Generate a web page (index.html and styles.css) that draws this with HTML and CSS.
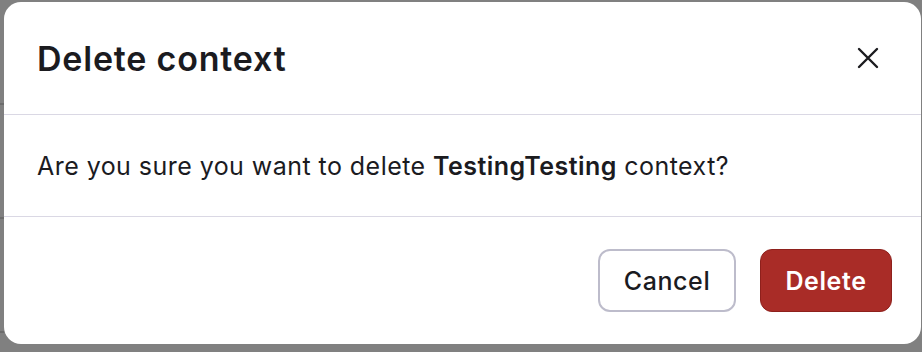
FILE: index.html
```html
<!DOCTYPE html>
<html>
<head>
<meta charset="utf-8">
<link rel="stylesheet" href="styles.css">
</head>
<body>
<div class="modal">
  <div class="modal-header">
    <h2 class="title">Delete context</h2>
    <button class="close" aria-label="Close">
      <svg width="22" height="22" viewBox="0 0 22 22"><path d="M2 2 L20 20 M20 2 L2 20" stroke="#1b1b1f" stroke-width="2.4" stroke-linecap="round"/></svg>
    </button>
  </div>
  <div class="modal-body">
    <p class="msg">Are you sure you want to delete <strong>TestingTesting</strong> context?</p>
  </div>
  <div class="modal-footer">
    <button class="btn btn-cancel">Cancel</button>
    <button class="btn btn-delete">Delete</button>
  </div>
</div>
</body>
</html>
```
FILE: styles.css
```css
html, body {
  margin: 0;
  padding: 0;
}
body {
  width: 922px;
  height: 352px;
  overflow: hidden;
  background-color: #808080;
  background-image:
    linear-gradient(#6c6c6c, #6c6c6c),
    linear-gradient(#6c6c6c, #6c6c6c),
    linear-gradient(#6c6c6c, #6c6c6c);
  background-size: 4px 2px, 4px 2px, 4px 2px;
  background-position: 0 103px, 0 217px, 0 331px;
  background-repeat: no-repeat;
  font-family: Inter, "Liberation Sans", sans-serif;
  color: #1b1b1f;
}
.modal {
  margin: 2px 0 0 4px;
  width: 917px;
  height: 342px;
  background: #ffffff;
  border-radius: 17px;
  display: flex;
  flex-direction: column;
  box-sizing: border-box;
}
.modal-header {
  height: 113px;
  box-sizing: border-box;
  border-bottom: 1px solid #dad8e4;
  display: flex;
  align-items: center;
  justify-content: space-between;
  padding: 0 41px 0 33px;
}
.title {
  margin: 0;
  font-size: 34px;
  font-weight: 600;
  letter-spacing: 0.8px;
  color: #1b1b1f;
}
.close {
  border: 0;
  background: none;
  padding: 0;
  width: 24px;
  height: 24px;
  display: flex;
  align-items: center;
  justify-content: center;
  cursor: pointer;
}
.modal-body {
  height: 102px;
  box-sizing: border-box;
  border-bottom: 1px solid #dad8e4;
  display: flex;
  align-items: center;
  padding: 0 33px;
}
.msg {
  margin: 0;
  font-size: 25px;
  letter-spacing: 0.45px;
  color: #1b1b1f;
}
.msg strong {
  font-weight: 600;
}
.modal-footer {
  flex: 1;
  display: flex;
  align-items: center;
  justify-content: flex-end;
  gap: 24px;
  padding: 0 29px 0 33px;
}
.btn {
  height: 63px;
  border-radius: 12px;
  font-family: Inter, "Liberation Sans", sans-serif;
  font-size: 25px;
  letter-spacing: 0.6px;
  font-weight: 500;
  box-sizing: border-box;
  cursor: pointer;
  padding: 0;
}
.btn-cancel {
  width: 138px;
  background: #ffffff;
  border: 2px solid #bdbccb;
  color: #1b1b1f;
}
.btn-delete {
  width: 132px;
  background: #a92c27;
  border: 1px solid #8e201c;
  color: #ffffff;
  font-weight: 600;
}
```
